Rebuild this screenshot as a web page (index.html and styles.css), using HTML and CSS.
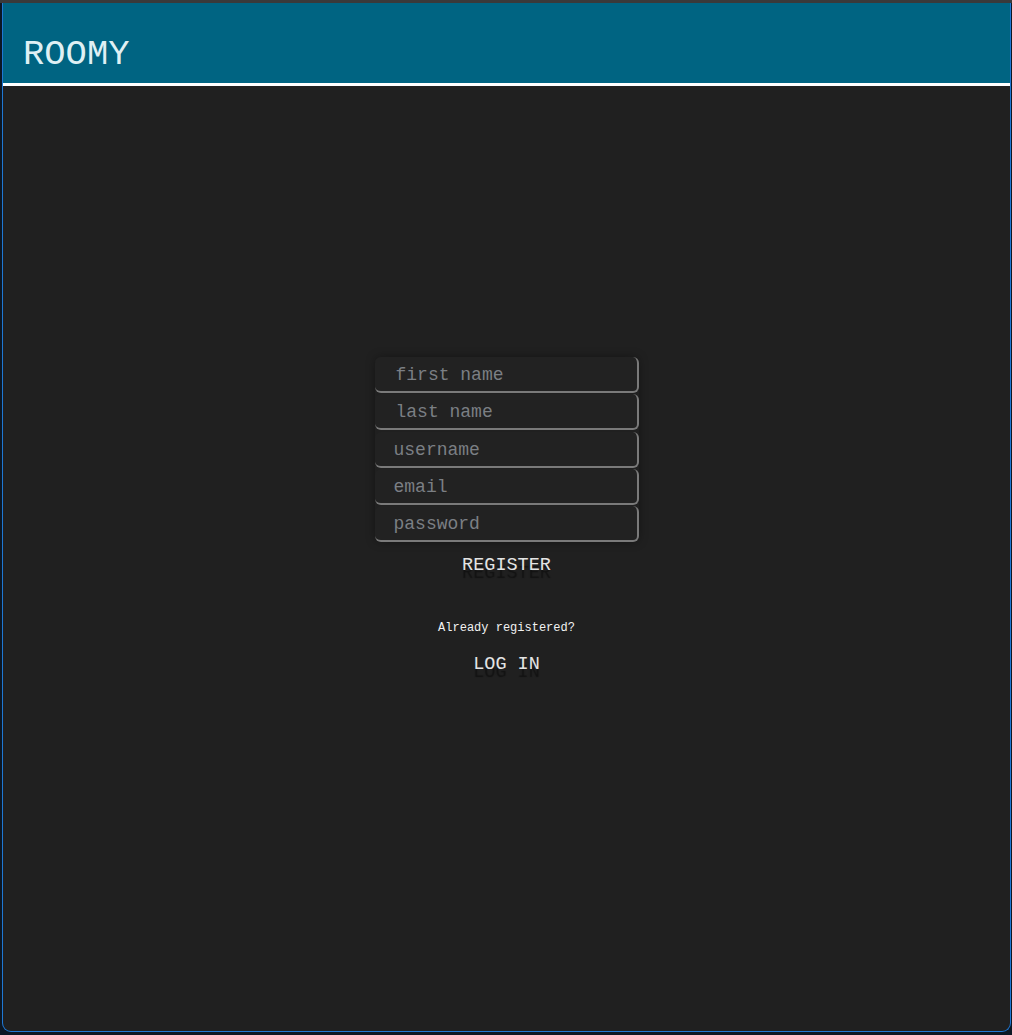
FILE: index.html
```html
<!DOCTYPE html>
<html>
<head>
<meta charset="utf-8">
<title>Roomy</title>
<link rel="stylesheet" href="styles.css">
</head>
<body>
<div class="topstrip"></div>
<div class="window">
  <header class="header">
    <h1 class="brand">ROOMY</h1>
  </header>
  <main class="main">
    <form class="register">
      <div class="fields">
        <input class="field field-indent" type="text" placeholder="first name">
        <input class="field field-indent" type="text" placeholder="last name">
        <input class="field" type="text" placeholder="username">
        <input class="field" type="email" placeholder="email">
        <input class="field" type="password" placeholder="password">
      </div>
      <button class="action" type="button">REGISTER</button>
      <p class="hint">Already registered?</p>
      <button class="action" type="button">LOG IN</button>
    </form>
  </main>
</div>
</body>
</html>
```

FILE: styles.css
```css
html, body {
  margin: 0;
  padding: 0;
}
body {
  background: #0c1724;
  height: 1035px;
  overflow: hidden;
  font-family: "Liberation Mono", monospace;
}
.topstrip {
  height: 3px;
  background: #3a3a3a;
}
.window {
  margin: 0 1px 0 2px;
  height: 1028px;
  border-left: 1px solid #1f78d4;
  border-right: 1px solid #1f78d4;
  border-bottom: 1px solid #1f78d4;
  border-radius: 0 0 9px 9px;
  background: #202020;
  overflow: hidden;
  display: flex;
  flex-direction: column;
}
.header {
  height: 80px;
  background: #006482;
  border-bottom: 3px solid #ffffff;
  display: flex;
  align-items: center;
  padding-left: 20px;
}
.brand {
  margin: 22px 0 0 0;
  font-family: "Liberation Mono", monospace;
  font-weight: normal;
  font-size: 35.5px;
  color: #dff0f4;
  letter-spacing: 0;
}
.main {
  flex: 1;
  display: flex;
  justify-content: center;
  padding-top: 271px;
}
.register {
  width: 264px;
  display: flex;
  flex-direction: column;
  align-items: center;
}
.fields {
  width: 264px;
  display: flex;
  flex-direction: column;
  gap: 1.25px;
  box-shadow: 0 0 10px rgba(0, 0, 0, 0.35);
  border-radius: 6px;
}
.field {
  box-sizing: border-box;
  width: 264px;
  height: 36px;
  margin: 0;
  padding: 2px 0 0 19px;
  background: #222222;
  border: none;
  border-right: 2px solid #7a7a7a;
  border-bottom: 2px solid #7a7a7a;
  border-radius: 6px;
  font-family: "Liberation Mono", monospace;
  font-size: 18px;
  color: #c8c8c8;
  outline: none;
}
.field-indent {
  padding-left: 21px;
}
.field::placeholder {
  color: #7b7f84;
}
.action {
  margin: 9px 0 0 0;
  padding: 0;
  background: transparent;
  border: none;
  font-family: "Liberation Mono", monospace;
  font-size: 18.5px;
  color: #e4e4e4;
  text-shadow: 0 8px 1px rgba(0, 0, 0, 0.45);
  line-height: 30px;
  cursor: pointer;
}
.hint {
  margin: 40px 0 6px 0;
  font-family: "Liberation Mono", monospace;
  font-size: 12px;
  line-height: 14px;
  color: #f2f2f2;
}
```
